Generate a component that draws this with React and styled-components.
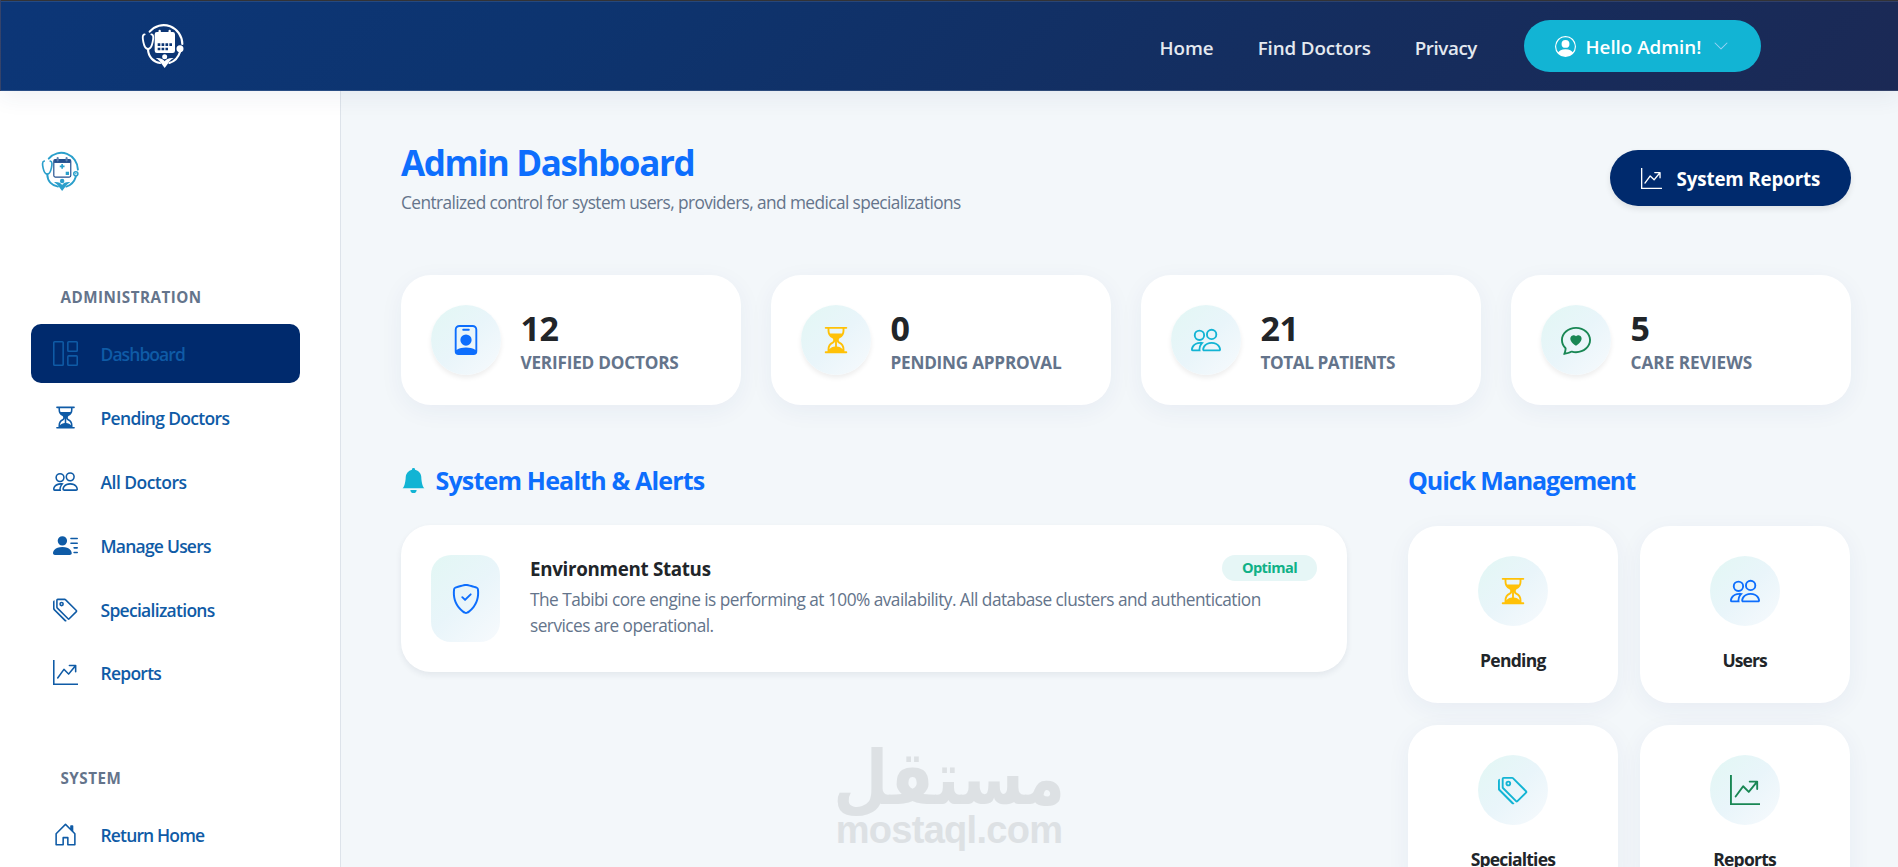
import React from 'react';
import styled, { createGlobalStyle } from 'styled-components';
import {
  BsGrid1X2, BsHourglassSplit, BsPeople, BsPersonLinesFill, BsTags, BsGraphUpArrow,
  BsHouseDoor, BsPersonBadge, BsChatHeart, BsShieldCheck, BsBellFill, BsPersonCircle, BsChevronDown,
} from 'react-icons/bs';

const GlobalStyle = createGlobalStyle`
  *, *::before, *::after { box-sizing: border-box; }
  body {
    margin: 0;
    font-family: "Open Sans", "Noto Sans", sans-serif;
    color: #212529;
    background: #f3f7fa;
  }
  h1, h2, h3, p { margin: 0; }
  svg { display: block; flex: none; }
`;

const Page = styled.div`
  position: relative;
  height: 867px;
  overflow: hidden;
  display: flex;
  flex-direction: column;
`;

const TopBar = styled.header`
  position: relative;
  z-index: 2;
  flex: none;
  height: 91px;
  padding: 0 137px 0 140px;
  display: flex;
  align-items: center;
  background: linear-gradient(135deg, #0c3677 0%, #0d346f 30%, #152d5e 70%, #1b2955 100%);
  border: 1px solid rgba(255, 255, 255, 0.12);
  border-right: 0;
  border-top: 0;
  box-shadow: inset 0 1px 0 #333336, inset 0 2px 0 rgba(255, 255, 255, 0.1), 0 6px 22px rgba(40, 50, 120, 0.07);
`;

const Nav = styled.nav`
  margin-left: auto;
  display: flex;
  align-items: center;
  gap: 44px;
  padding-top: 5px;
`;

const NavLink = styled.a`
  font-size: 18.75px;
  font-weight: 600;
  line-height: 28px;
  letter-spacing: ${(p) => p.$track || 0}px;
  color: #e4e9f0;
`;

const AccountButton = styled.button`
  width: 237px;
  height: 52px;
  margin: 2px 0 0 47px;
  padding: 0 0 0 31px;
  display: flex;
  align-items: center;
  border: 0;
  border-radius: 26px;
  background: #12b4d4;
  color: #fff;
  font: 600 18.75px/28px "Open Sans", sans-serif;

  span { margin: 1px 12px 0 9.5px; }
  svg:last-child { color: #9ad2f5; }
`;

const Body = styled.div`
  flex: 1;
  min-height: 0;
  display: flex;
`;

const Sidebar = styled.aside`
  flex: none;
  width: 341px;
  padding: 59px 40px 0 31px;
  background: #fff;
  border-right: 1px solid #dde3ea;
`;

const BrandSlot = styled.div`
  height: 137px;
  padding-left: 10px;
`;

const MenuTitle = styled.div`
  padding-left: 29.5px;
  margin-bottom: 17px;
  font-size: 15.2px;
  font-weight: 700;
  line-height: 20px;
  letter-spacing: 0.48px;
  color: #64748b;
`;

const Menu = styled.ul`
  margin: 0 0 ${(p) => p.$after || 0}px;
  padding: 0;
  list-style: none;
  display: grid;
  gap: 5px;
`;

const MenuItem = styled.li`
  height: 58.9px;
  padding-left: 21.5px;
  display: flex;
  align-items: center;
  gap: 23px;
  border-radius: 10px;
  font-size: 17.5px;
  font-weight: 550;
  letter-spacing: ${(p) => p.$track}px;
  color: #0f5ba6;
  background: ${(p) => (p.$active ? '#002a6d' : 'transparent')};

  span { padding-top: 1px; }
`;

const Main = styled.main`
  flex: 1;
  min-width: 0;
  padding: 50px 47px 0 60px;
`;

const PageHead = styled.div`
  height: 74px;
  margin-bottom: 60px;
  display: flex;
  justify-content: space-between;
  align-items: center;
`;

const Title = styled.h1`
  padding-top: 2px;
  font-size: 35px;
  font-weight: 700;
  line-height: 42px;
  letter-spacing: -1.38px;
  color: #0d6efd;
  margin-bottom: 5px;
`;

const Muted = styled.p`
  padding-top: 1px;
  font-size: 17.3px;
  line-height: 26.25px;
  letter-spacing: ${(p) => p.$track}px;
  color: #64748b;
`;

const ReportsButton = styled.button`
  width: 241px;
  height: 56px;
  padding: 0 0 0 31px;
  display: flex;
  align-items: center;
  gap: 14.5px;
  border: 0;
  border-radius: 28px;
  background: #002a6d;
  color: #fff;
  font: 700 18.75px/28px "Open Sans", sans-serif;
  letter-spacing: -0.14px;
  box-shadow: 0 3px 6px rgba(0, 0, 0, 0.09);

  span { padding-top: 2px; }
`;

const Stats = styled.section`
  display: grid;
  grid-template-columns: repeat(4, 1fr);
  gap: 30px;
  margin-bottom: 60px;
`;

const Card = styled.div`
  background: #fff;
  border-radius: 30px;
  box-shadow: 0 6px 24px rgba(40, 50, 120, 0.055);
`;

const StatCard = styled(Card)`
  height: 130px;
  padding: 0 30px;
  display: flex;
  align-items: center;
  gap: 19.5px;
`;

const IconDisc = styled.div`
  flex: none;
  width: 70px;
  height: 70px;
  display: grid;
  place-items: center;
  border-radius: 50%;
  font-size: 30px;
  color: ${(p) => p.$color};
  background: linear-gradient(135deg, #e2f7f4 0%, #e9f5fa 50%, #f7fafd 100%);
  box-shadow: ${(p) => (p.$raised ? '0 3px 5px rgba(0, 0, 0, 0.07)' : 'none')};
`;

const StatValue = styled.div`
  padding-top: 2px;
  font-size: 34px;
  font-weight: 700;
  line-height: 42px;
  letter-spacing: -0.5px;
`;

const StatLabel = styled.div`
  font-size: 17.2px;
  font-weight: 680;
  line-height: 27px;
  letter-spacing: ${(p) => p.$track}px;
  color: #64748b;
`;

const Columns = styled.div`
  display: grid;
  grid-template-columns: 946px 441.5px;
  column-gap: 61px;
  align-items: start;
`;

const SectionTitle = styled.h2`
  display: flex;
  align-items: center;
  gap: 9.5px;
  margin-bottom: ${(p) => p.$after}px;
  font-size: 25px;
  font-weight: 700;
  line-height: 30px;
  letter-spacing: ${(p) => p.$track}px;
  color: #0d6efd;

  svg { color: #12b4d4; }
`;

const AlertCard = styled(Card)`
  height: 147px;
  padding: 30px;
  display: flex;
  gap: 30px;
  box-shadow: 0 3px 6px rgba(30, 40, 70, 0.075);
`;

const AlertIcon = styled.div`
  flex: none;
  width: 69px;
  display: grid;
  place-items: center;
  border-radius: 20px;
  font-size: 30px;
  color: #0d6efd;
  background: linear-gradient(135deg, #e2f7f4 0%, #e9f5fa 50%, #f7fafd 100%);
`;

const AlertText = styled.div`
  flex: 1;
`;

const AlertHead = styled.div`
  display: flex;
  justify-content: space-between;
  align-items: flex-start;
  height: 31px;
`;

const AlertName = styled.h3`
  font-size: 18.75px;
  font-weight: 700;
  line-height: 28px;
  letter-spacing: -0.3px;
`;

const Badge = styled.span`
  width: 95px;
  height: 26px;
  border-radius: 13px;
  background: #e6f6f6;
  color: #10b187;
  font-size: 14.6px;
  font-weight: 700;
  line-height: 25px;
  letter-spacing: -0.6px;
  text-align: center;
`;

const QuickGrid = styled.div`
  display: grid;
  grid-template-columns: 1fr 1fr;
  gap: 22px;
`;

const QuickCard = styled(Card)`
  height: 177px;
  padding-top: 30px;
  display: flex;
  flex-direction: column;
  align-items: center;
  gap: 21px;
  font-size: 17.5px;
  font-weight: 700;
  line-height: 26px;
  letter-spacing: ${(p) => p.$track}px;
`;

const Watermark = styled.div`
  position: absolute;
  left: 835px;
  top: 734px;
  width: 228px;
  display: flex;
  flex-direction: column;
  align-items: center;
  color: #dde1e4;
`;

const WatermarkArabic = styled.div`
  font: 700 75px/88px "DejaVu Sans", sans-serif;
  height: 76px;
  white-space: nowrap;
  transform: scaleX(0.845);
`;

const WatermarkLatin = styled.div`
  font: 700 38px/40px "Liberation Sans", sans-serif;
  letter-spacing: -0.7px;
  white-space: nowrap;
`;

function ClinicLogo({ size, line, fill, header, dots, plus }) {
  return (
    <svg width={size} height={(size * 140) / 132} viewBox="424 68 132 140" fill="none" stroke={line} strokeWidth="6.5" strokeLinecap="round" aria-hidden="true">
      <path d="M450 97A56 58 0 0 1 548 134" />
      <path d="M435 105C427 106 429 118 431 128C434 143 439 149 445 149C451 149 456 143 459 128C461 118 463 106 455 105" strokeWidth="5.5" />
      <path d="M445 150C446 174 462 188 481 191" />
      <path d="M541 158C536 174 526 186 509 191" />
      <circle cx="541" cy="148" r={plus ? 7 : 8} fill={plus ? '#fff' : line} strokeWidth="5" />
      {plus && <circle cx="541" cy="148" r="2.5" fill={line} stroke="none" />}
      <rect x="467" y="100" width="57" height="59" rx="5" fill={fill} stroke={header} strokeWidth="4" />
      <path d="M468 106H523" stroke={header} strokeWidth="11" strokeLinecap="butt" />
      <path d="M480 95V103M510 95V103" stroke={plus ? '#5b7fae' : line} strokeWidth="7" />
      {plus ? (
        <>
          <path d="M495 115V131M487 123H503" stroke={line} strokeWidth="5.5" strokeLinecap="butt" />
          <rect x="507" y="141" width="11" height="11" fill={line} stroke="none" />
        </>
      ) : (
        <path d="M474 136H517M474 149H505" stroke={dots} strokeWidth="8" strokeDasharray="8 3.7" strokeLinecap="butt" />
      )}
      <circle cx="495" cy="172" r="7.5" fill={line} stroke="none" />
      <path d="M468 176C482 175 491 179 495 186C499 179 508 175 522 176C513 181 508 187 504 194L495 206L486 194C482 187 477 181 468 176Z" fill={line} stroke="none" />
    </svg>
  );
}

const adminMenu = [
  ['Dashboard', BsGrid1X2, -0.93],
  ['Pending Doctors', BsHourglassSplit, -0.68],
  ['All Doctors', BsPeople, -0.53],
  ['Manage Users', BsPersonLinesFill, -0.78],
  ['Specializations', BsTags, -0.71],
  ['Reports', BsGraphUpArrow, -0.75],
];

const stats = [
  ['12', 'VERIFIED DOCTORS', BsPersonBadge, '#0d6efd', -0.22],
  ['0', 'PENDING APPROVAL', BsHourglassSplit, '#ffc107', -0.25],
  ['21', 'TOTAL PATIENTS', BsPeople, '#12b4d4', -0.45],
  ['5', 'CARE REVIEWS', BsChatHeart, '#198754', 0],
];

const quick = [
  ['Pending', BsHourglassSplit, '#ffc107', -0.7],
  ['Users', BsPeople, '#0d6efd', -0.9],
  ['Specialties', BsTags, '#12b4d4', -0.8],
  ['Reports', BsGraphUpArrow, '#198754', -0.75],
];

export default function App() {
  return (
    <Page>
      <GlobalStyle />
      <TopBar>
        <ClinicLogo size={44} line="#fff" fill="#fff" header="#fff" dots="#0d3674" />
        <Nav>
          <NavLink>Home</NavLink>
          <NavLink $track={-0.1}>Find Doctors</NavLink>
          <NavLink $track={-0.4}>Privacy</NavLink>
        </Nav>
        <AccountButton>
          <BsPersonCircle size={21} />
          <span>Hello Admin!</span>
          <BsChevronDown size={16} />
        </AccountButton>
      </TopBar>
      <Body>
        <Sidebar>
          <BrandSlot>
            <ClinicLogo size={39.3} line="#2a9fcb" fill="#fff" header="#234f8e" plus />
          </BrandSlot>
          <MenuTitle>ADMINISTRATION</MenuTitle>
          <Menu $after={65.5}>
            {adminMenu.map(([label, Icon, track], i) => (
              <MenuItem key={label} $active={i === 0} $track={track}>
                <Icon size={25} />
                <span>{label}</span>
              </MenuItem>
            ))}
          </Menu>
          <MenuTitle>SYSTEM</MenuTitle>
          <Menu>
            <MenuItem $track={-0.85}>
              <BsHouseDoor size={25} />
              <span>Return Home</span>
            </MenuItem>
          </Menu>
        </Sidebar>
        <Main>
          <PageHead>
            <div>
              <Title>Admin Dashboard</Title>
              <Muted $track={-0.59}>Centralized control for system users, providers, and medical specializations</Muted>
            </div>
            <ReportsButton>
              <BsGraphUpArrow size={21} />
              <span>System Reports</span>
            </ReportsButton>
          </PageHead>
          <Stats>
            {stats.map(([value, label, Icon, color, track]) => (
              <StatCard key={label}>
                <IconDisc $color={color} $raised><Icon /></IconDisc>
                <div>
                  <StatValue>{value}</StatValue>
                  <StatLabel $track={track}>{label}</StatLabel>
                </div>
              </StatCard>
            ))}
          </Stats>
          <Columns>
            <section>
              <SectionTitle $track={-0.82} $after={30}>
                <BsBellFill size={25} />
                System Health &amp; Alerts
              </SectionTitle>
              <AlertCard>
                <AlertIcon><BsShieldCheck /></AlertIcon>
                <AlertText>
                  <AlertHead>
                    <AlertName>Environment Status</AlertName>
                    <Badge>Optimal</Badge>
                  </AlertHead>
                  <Muted $track={-0.535}>
                    The Tabibi core engine is performing at 100% availability. All database clusters and authentication<br />
                    services are operational.
                  </Muted>
                </AlertText>
              </AlertCard>
            </section>
            <section>
              <SectionTitle $track={-1.1} $after={31}>Quick Management</SectionTitle>
              <QuickGrid>
                {quick.map(([label, Icon, color, track]) => (
                  <QuickCard key={label} $track={track}>
                    <IconDisc $color={color}><Icon /></IconDisc>
                    {label}
                  </QuickCard>
                ))}
              </QuickGrid>
            </section>
          </Columns>
        </Main>
      </Body>
      <Watermark>
        <WatermarkArabic lang="ar" dir="rtl">مستقل</WatermarkArabic>
        <WatermarkLatin>mostaql.com</WatermarkLatin>
      </Watermark>
    </Page>
  );
}
